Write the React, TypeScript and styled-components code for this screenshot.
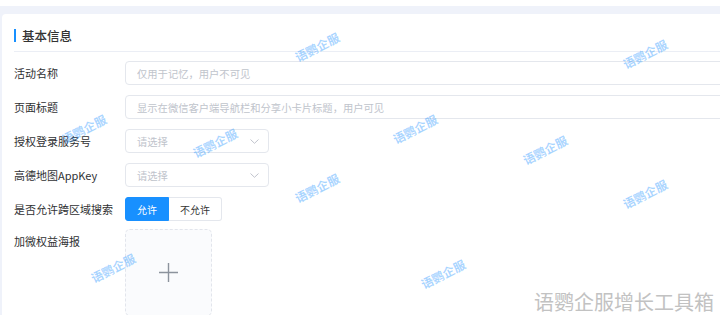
import React from "react";
import styled, { createGlobalStyle } from "styled-components";

const GlobalStyle = createGlobalStyle`
  html, body {
    margin: 0;
    padding: 0;
    background: #fff;
    overflow: hidden;
  }
  body {
    font-family: "Noto Sans CJK SC", "Noto Sans", "Liberation Sans", sans-serif;
  }
`;

const Page = styled.div`
  position: relative;
  width: 720px;
  height: 315px;
  overflow: hidden;
  background: #eff2fa;
`;
const TopStrip = styled.div`
  height: 6px;
  background: #fff;
`;
const Content = styled.div`
  padding: 8px 0 0 2px;
`;
const Card = styled.section`
  width: 820px;
  height: 400px;
  padding-left: 12px;
  background: #fff;
  border-radius: 4px 0 0 0;
`;
const Header = styled.div`
  display: flex;
  align-items: center;
  gap: 6px;
  padding: 15px 0 9px;
  border-bottom: 1px solid #ebeef5;
`;
const TitleBar = styled.span`
  width: 2px;
  height: 13px;
  background: #1890ff;
`;
const Title = styled.h2`
  margin: 0;
  font-size: 12.5px;
  line-height: 13px;
  font-weight: 500;
  color: #333;
`;
const Form = styled.div`
  display: flex;
  flex-direction: column;
  gap: 10px;
  padding-top: 9px;
`;
const Row = styled.div<{ $top?: boolean }>`
  display: flex;
  align-items: ${(p) => (p.$top ? "flex-start" : "center")};
  margin-top: ${(p) => (p.$top ? "-2px" : "0")};
`;
const Label = styled.label`
  width: 111px;
  flex-shrink: 0;
  font-size: 11px;
  line-height: 24px;
  color: #303133;
`;
const Input = styled.input`
  flex: 1;
  height: 24px;
  box-sizing: border-box;
  padding: 0 11px;
  border: 1px solid #e4e7ed;
  border-radius: 4px;
  font-family: inherit;
  font-size: 10.3px;
  color: #333;
  outline: none;

  &::placeholder {
    color: #c0c4cc;
  }
`;
const Select = styled.div`
  width: 144px;
  height: 24px;
  box-sizing: border-box;
  display: flex;
  align-items: center;
  justify-content: space-between;
  padding: 0 9px 0 11px;
  border: 1px solid #e4e7ed;
  border-radius: 4px;
  font-size: 10.3px;
  color: #c0c4cc;
`;
const RadioGroup = styled.div`
  display: flex;
`;
const RadioButton = styled.button<{ $active?: boolean }>`
  height: 24px;
  padding: 0 11px;
  font-family: inherit;
  font-size: 10px;
  color: ${(p) => (p.$active ? "#fff" : "#333")};
  background: ${(p) => (p.$active ? "#1890ff" : "#fff")};
  border: 1px solid ${(p) => (p.$active ? "#1890ff" : "#e4e7ed")};
  border-left-width: ${(p) => (p.$active ? "1px" : "0")};
  border-radius: ${(p) => (p.$active ? "3px 0 0 3px" : "0 3px 3px 0")};
`;
const Upload = styled.div`
  width: 87px;
  height: 87px;
  box-sizing: border-box;
  display: flex;
  align-items: center;
  justify-content: center;
  border: 1px dashed #e2e5ec;
  border-radius: 5px;
  background: #fafbfd;
`;
const Marks = styled.div`
  position: absolute;
  inset: 0;
  pointer-events: none;
`;
const Mark = styled.span`
  position: absolute;
  transform: translate(-50%, -50%) rotate(-27deg);
  font-size: 12px;
  line-height: 1;
  font-weight: 700;
  white-space: nowrap;
  color: rgba(24, 144, 255, 0.38);
`;
const Brand = styled.div`
  position: absolute;
  right: 6px;
  bottom: 3px;
  font-size: 20px;
  line-height: 20px;
  color: #c2c2c2;
  text-shadow: 0 0 1px #fff;
`;

const marks = [
  [317, 47],
  [645, 54],
  [84, 129],
  [215, 143],
  [415, 129],
  [545, 150],
  [317, 188],
  [645, 194],
  [113, 268],
  [443, 274],
];

function Chevron() {
  return (
    <svg width="9" height="5" viewBox="0 0 9 5" fill="none">
      <path d="M0.5 0.5L4.5 4.3L8.5 0.5" stroke="#c0c4cc" strokeWidth="1" />
    </svg>
  );
}

function Plus() {
  return (
    <svg width="19" height="19" viewBox="0 0 19 19">
      <path d="M9.5 0V19M0 9.5H19" stroke="#8c939d" strokeWidth="1.4" />
    </svg>
  );
}

export default function App() {
  return (
    <Page>
      <GlobalStyle />
      <TopStrip />
      <Content>
        <Card>
          <Header>
            <TitleBar />
            <Title>基本信息</Title>
          </Header>
          <Form>
            <Row>
              <Label>活动名称</Label>
              <Input placeholder="仅用于记忆，用户不可见" />
            </Row>
            <Row>
              <Label>页面标题</Label>
              <Input placeholder="显示在微信客户端导航栏和分享小卡片标题，用户可见" />
            </Row>
            <Row>
              <Label>授权登录服务号</Label>
              <Select>
                请选择
                <Chevron />
              </Select>
            </Row>
            <Row>
              <Label>高德地图AppKey</Label>
              <Select>
                请选择
                <Chevron />
              </Select>
            </Row>
            <Row>
              <Label>是否允许跨区域搜索</Label>
              <RadioGroup>
                <RadioButton $active>允许</RadioButton>
                <RadioButton>不允许</RadioButton>
              </RadioGroup>
            </Row>
            <Row $top>
              <Label>加微权益海报</Label>
              <Upload>
                <Plus />
              </Upload>
            </Row>
          </Form>
        </Card>
      </Content>
      <Marks>
        {marks.map(([x, y], i) => (
          <Mark key={i} style={{ left: x, top: y }}>
            语鹦企服
          </Mark>
        ))}
      </Marks>
      <Brand>语鹦企服增长工具箱</Brand>
    </Page>
  );
}
